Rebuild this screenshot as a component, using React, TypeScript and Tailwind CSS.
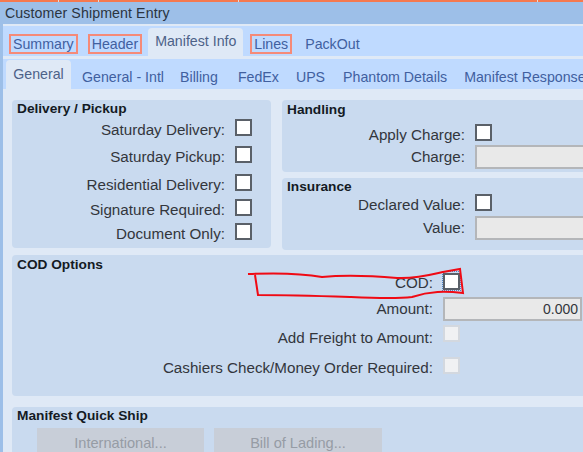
const Check = ({ disabled = false }: { disabled?: boolean }) => (
  <div
    className={
      disabled
        ? "w-[17px] h-[17px] border-2 border-[#d3d8df] bg-[#f0f1f3] shrink-0"
        : "w-[17px] h-[17px] border-2 border-[#5a6068] bg-white shrink-0"
    }
  />
);

const Row = ({ label, width, height, children }: { label: string; width: number; height: string; children: React.ReactNode }) => (
  <div className={`flex items-center ${height}`}>
    <span className="shrink-0 text-right text-[15.2px] text-[#33363c] whitespace-nowrap" style={{ width }}>
      {label}
    </span>
    <div className="ml-[10px] flex-1 flex items-center">{children}</div>
  </div>
);

const Field = ({ value = "", width }: { value?: string; width: string }) => (
  <div className={`${width} h-[24px] shrink-0 border-2 border-[#b4b6b9] bg-[#e9e9e9] text-right pr-[2px] leading-[20px] text-[14px] text-[#33363c]`}>
    {value}
  </div>
);

const subTabs = [
  { name: "General - Intl", cls: "" },
  { name: "Billing", cls: "ml-[16px]" },
  { name: "FedEx", cls: "ml-[20px]" },
  { name: "UPS", cls: "ml-[17px]" },
  { name: "Phantom Details", cls: "ml-[18px]" },
  { name: "Manifest Response", cls: "ml-[17px]" },
];

export default function App() {
  return (
    <div className="relative w-[583px] h-[452px] overflow-hidden bg-[#dfe9f6] text-[14.2px] font-['Liberation_Sans',Arial,sans-serif]">
      <div className="h-[2px] flex gap-[1px] bg-[#e9dcd4]">
        <div className="w-[58px] bg-[#f5794f]" />
        <div className="w-[39px] bg-[#f5794f]" />
        <div className="w-[139px] bg-[#f5794f]" />
        <div className="w-[298px] bg-[#f5794f]" />
        <div className="flex-1 bg-[#f5794f]" />
      </div>
      <div className="h-[22px] bg-[#9dbfe8] pl-[5px] leading-[22px] tracking-[0.1px] text-[#2b3440]">Customer Shipment Entry</div>
      <div className="h-[2px] border-l-[3px] border-[#9dbfe8] bg-[#dfe9f6]" />

      {/* Main tabs */}
      <div className="h-[30px] border-l-[3px] border-[#9dbfe8] bg-[#bfdaff] flex items-end pl-[7px] text-[#41609f]">
        <span className="-ml-[1px] mb-[2px] h-[20px] px-[2px] leading-[17px] border-2 border-[#f58a78]">Summary</span>
        <span className="ml-[10px] mb-[2px] h-[20px] px-[2px] leading-[17px] border-2 border-[#f58a78]">Header</span>
        <span className="ml-[6px] h-[28px] w-[95px] rounded-t-[4px] bg-[#dfe9f6] text-center leading-[26px] text-[#4d6288]">Manifest Info</span>
        <span className="ml-[7px] mb-[2px] h-[20px] px-[2px] leading-[17px] border-2 border-[#f58a78]">Lines</span>
        <span className="ml-[13px] mb-[2px] h-[20px] leading-[20px]">PackOut</span>
      </div>
      <div className="h-[3px] border-l-[3px] border-[#9dbfe8] bg-[#dfe9f6]" />

      {/* Sub tabs */}
      <div className="h-[30px] border-l-[3px] border-[#9dbfe8] bg-[#bfdaff] flex items-end pl-[3px] text-[#41609f] whitespace-nowrap">
        <span className="h-[29px] w-[65px] shrink-0 rounded-t-[4px] bg-[#dfe9f6] text-center leading-[28px] text-[#4d6288]">General</span>
        <div className="flex ml-[11px] mb-[2px] leading-[20px]">
          {subTabs.map((t) => (
            <span key={t.name} className={t.cls}>{t.name}</span>
          ))}
        </div>
      </div>

      {/* Content */}
      <div className="h-[363px] border-l-[3px] border-[#9dbfe8] pl-[9px] pt-[11px]">
        <div className="flex gap-[11px] h-[150px]">
          <section className="w-[259px] h-[148px] shrink-0 rounded-[4px] bg-[#c9daef] pl-[5px] pt-[1px]">
            <h3 className="font-bold text-[13.7px] leading-[16px] text-[#141a24]">Delivery / Pickup</h3>
            <div className="mt-[1px]">
              <Row label="Saturday Delivery:" width={208} height="h-[24px]"><div className="mb-[6px]"><Check /></div></Row>
              <Row label="Saturday Pickup:" width={208} height="h-[30px]"><div className="mb-[5px]"><Check /></div></Row>
              <Row label="Residential Delivery:" width={208} height="h-[26px]"><div className="mb-[5px]"><Check /></div></Row>
              <Row label="Signature Required:" width={208} height="h-[24px]"><div className="mb-[6px]"><Check /></div></Row>
              <Row label="Document Only:" width={208} height="h-[24px]"><div className="mb-[5px]"><Check /></div></Row>
            </div>
          </section>
          <div className="flex-1 flex flex-col gap-[6px] min-w-0">
            <section className="h-[72px] rounded-l-[4px] bg-[#c9daef] pl-[5px] pt-[2px]">
              <h3 className="font-bold text-[13.7px] leading-[16px] text-[#141a24]">Handling</h3>
              <div className="mt-[6px]">
                <Row label="Apply Charge:" width={178} height="h-[22px]"><div className="mb-[6px]"><Check /></div></Row>
                <Row label="Charge:" width={178} height="h-[22px]"><Field width="w-[160px]" /></Row>
              </div>
            </section>
            <section className="h-[72px] rounded-l-[4px] bg-[#c9daef] pl-[5px] pt-[1px]">
              <h3 className="font-bold text-[13.7px] leading-[16px] text-[#141a24]">Insurance</h3>
              <div className="-mt-[1px]">
                <Row label="Declared Value:" width={178} height="h-[22px]"><div className="mb-[5px]"><Check /></div></Row>
                <Row label="Value:" width={178} height="h-[24px]"><Field width="w-[160px]" /></Row>
              </div>
            </section>
          </div>
        </div>

        <section className="mt-[5px] h-[141px] rounded-l-[4px] bg-[#c9daef] pl-[5px] pt-[2px]">
          <h3 className="font-bold text-[13.7px] leading-[16px] text-[#141a24]">COD Options</h3>
          <Row label="COD:" width={416} height="h-[21px]"><div className="mb-[4px]"><Check /></div></Row>
          <Row label="Amount:" width={416} height="h-[30px]"><Field value="0.000" width="w-[139px]" /></Row>
          <Row label="Add Freight to Amount:" width={416} height="h-[28px]"><div className="mb-[9px]"><Check disabled /></div></Row>
          <Row label="Cashiers Check/Money Order Required:" width={416} height="h-[32px]"><div className="mb-[6px]"><Check disabled /></div></Row>
        </section>

        <section className="mt-[11px] h-[60px] rounded-l-[4px] bg-[#c9daef] pl-[5px] pt-[1px]">
          <h3 className="font-bold text-[13.7px] leading-[16px] text-[#141a24]">Manifest Quick Ship</h3>
          <div className="flex gap-[10px] ml-[20px] mt-[4px]">
            <div className="w-[167px] h-[30px] bg-[#c8ced8] text-center text-[14.6px] leading-[30px] text-[#969ca5]">International...</div>
            <div className="w-[168px] h-[30px] bg-[#c8ced8] text-center text-[14.6px] leading-[30px] text-[#969ca5]">Bill of Lading...</div>
          </div>
        </section>
      </div>

      {/* Focus dots round the COD box */}
      <div className="absolute left-[442px] top-[271px] w-[19px] h-[20px] border border-dotted border-[#4f83c4]" />
      {/* Hand-drawn red annotation */}
      <svg className="absolute left-0 top-0 pointer-events-none" width="583" height="452" viewBox="0 0 583 452" fill="none">
        <path
          d="M248 274 C270 273 300 273 322 277 C350 274 375 276 397 278 C415 279 430 275 443 272 L460 269 L463 293 C445 291 430 291 412 297 C395 299 373 298 350 297 C320 296 285 295 258 295 L255 275"
          stroke="#f00a14"
          strokeWidth="2"
        />
      </svg>
    </div>
  );
}
